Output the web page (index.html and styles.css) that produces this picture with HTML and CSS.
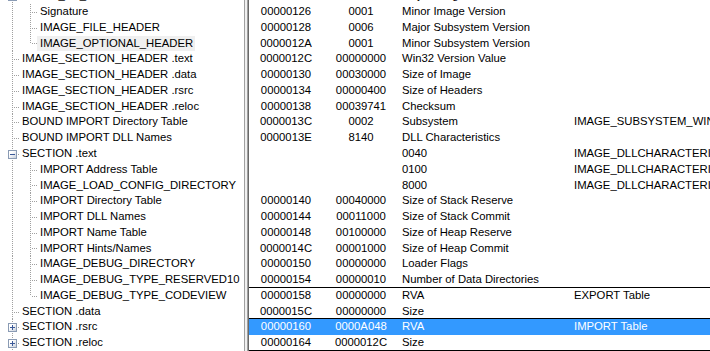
FILE: index.html
```html
<!DOCTYPE html>
<html lang="en">
<head>
  <meta charset="UTF-8" />
  <title>PE Headers</title>
  <link rel="stylesheet" href="styles.css">
</head>
<body>
  <div class="window">
    <div class="tree-pane">
      <div class="tree">
        <div class="node"><span class="g t"><span class="box minus"></span></span><span class="label">IMAGE_NT_HEADERS</span></div>
        <div class="node"><span class="g v"></span><span class="g t"></span><span class="label">Signature</span></div>
        <div class="node"><span class="g v"></span><span class="g t"></span><span class="label">IMAGE_FILE_HEADER</span></div>
        <div class="node"><span class="g v"></span><span class="g e"></span><span class="label selected">IMAGE_OPTIONAL_HEADER</span></div>
        <div class="node"><span class="g t"></span><span class="label">IMAGE_SECTION_HEADER .text</span></div>
        <div class="node"><span class="g t"></span><span class="label">IMAGE_SECTION_HEADER .data</span></div>
        <div class="node"><span class="g t"></span><span class="label">IMAGE_SECTION_HEADER .rsrc</span></div>
        <div class="node"><span class="g t"></span><span class="label">IMAGE_SECTION_HEADER .reloc</span></div>
        <div class="node"><span class="g t"></span><span class="label">BOUND IMPORT Directory Table</span></div>
        <div class="node"><span class="g t"></span><span class="label">BOUND IMPORT DLL Names</span></div>
        <div class="node"><span class="g t"><span class="box minus"></span></span><span class="label">SECTION .text</span></div>
        <div class="node"><span class="g v"></span><span class="g t"></span><span class="label">IMPORT Address Table</span></div>
        <div class="node"><span class="g v"></span><span class="g t"></span><span class="label">IMAGE_LOAD_CONFIG_DIRECTORY</span></div>
        <div class="node"><span class="g v"></span><span class="g t"></span><span class="label">IMPORT Directory Table</span></div>
        <div class="node"><span class="g v"></span><span class="g t"></span><span class="label">IMPORT DLL Names</span></div>
        <div class="node"><span class="g v"></span><span class="g t"></span><span class="label">IMPORT Name Table</span></div>
        <div class="node"><span class="g v"></span><span class="g t"></span><span class="label">IMPORT Hints/Names</span></div>
        <div class="node"><span class="g v"></span><span class="g t"></span><span class="label">IMAGE_DEBUG_DIRECTORY</span></div>
        <div class="node"><span class="g v"></span><span class="g t"></span><span class="label">IMAGE_DEBUG_TYPE_RESERVED10</span></div>
        <div class="node"><span class="g v"></span><span class="g e"></span><span class="label">IMAGE_DEBUG_TYPE_CODEVIEW</span></div>
        <div class="node"><span class="g t"></span><span class="label">SECTION .data</span></div>
        <div class="node"><span class="g t"><span class="box plus"></span></span><span class="label">SECTION .rsrc</span></div>
        <div class="node"><span class="g t"><span class="box plus"></span></span><span class="label">SECTION .reloc</span></div>
      </div>
    </div>
    <div class="splitter"></div>
    <div class="list-pane">
      <div class="list">
        <div class="row"><span class="c-off">00000124</span><span class="c-val">0000</span><span class="c-desc">Major Image Version</span></div>
        <div class="row"><span class="c-off">00000126</span><span class="c-val">0001</span><span class="c-desc">Minor Image Version</span></div>
        <div class="row"><span class="c-off">00000128</span><span class="c-val">0006</span><span class="c-desc">Major Subsystem Version</span></div>
        <div class="row"><span class="c-off">0000012A</span><span class="c-val">0001</span><span class="c-desc">Minor Subsystem Version</span></div>
        <div class="row"><span class="c-off">0000012C</span><span class="c-val">00000000</span><span class="c-desc">Win32 Version Value</span></div>
        <div class="row"><span class="c-off">00000130</span><span class="c-val">00030000</span><span class="c-desc">Size of Image</span></div>
        <div class="row"><span class="c-off">00000134</span><span class="c-val">00000400</span><span class="c-desc">Size of Headers</span></div>
        <div class="row"><span class="c-off">00000138</span><span class="c-val">00039741</span><span class="c-desc">Checksum</span></div>
        <div class="row"><span class="c-off">0000013C</span><span class="c-val">0002</span><span class="c-desc">Subsystem</span><span class="c-info">IMAGE_SUBSYSTEM_WINDOWS_GUI</span></div>
        <div class="row"><span class="c-off">0000013E</span><span class="c-val">8140</span><span class="c-desc">DLL Characteristics</span></div>
        <div class="row"><span class="c-off"></span><span class="c-val"></span><span class="c-desc">0040</span><span class="c-info">IMAGE_DLLCHARACTERISTICS_DYNAMIC_BASE</span></div>
        <div class="row"><span class="c-off"></span><span class="c-val"></span><span class="c-desc">0100</span><span class="c-info">IMAGE_DLLCHARACTERISTICS_NX_COMPAT</span></div>
        <div class="row"><span class="c-off"></span><span class="c-val"></span><span class="c-desc">8000</span><span class="c-info">IMAGE_DLLCHARACTERISTICS_TERMINAL_SERVER_AWARE</span></div>
        <div class="row"><span class="c-off">00000140</span><span class="c-val">00040000</span><span class="c-desc">Size of Stack Reserve</span></div>
        <div class="row"><span class="c-off">00000144</span><span class="c-val">00011000</span><span class="c-desc">Size of Stack Commit</span></div>
        <div class="row"><span class="c-off">00000148</span><span class="c-val">00100000</span><span class="c-desc">Size of Heap Reserve</span></div>
        <div class="row"><span class="c-off">0000014C</span><span class="c-val">00001000</span><span class="c-desc">Size of Heap Commit</span></div>
        <div class="row"><span class="c-off">00000150</span><span class="c-val">00000000</span><span class="c-desc">Loader Flags</span></div>
        <div class="row sep"><span class="c-off">00000154</span><span class="c-val">00000010</span><span class="c-desc">Number of Data Directories</span></div>
        <div class="row"><span class="c-off">00000158</span><span class="c-val">00000000</span><span class="c-desc">RVA</span><span class="c-info">EXPORT Table</span></div>
        <div class="row sep"><span class="c-off">0000015C</span><span class="c-val">00000000</span><span class="c-desc">Size</span></div>
        <div class="row selected"><span class="c-off">00000160</span><span class="c-val">0000A048</span><span class="c-desc">RVA</span><span class="c-info">IMPORT Table</span></div>
        <div class="row sep"><span class="c-off">00000164</span><span class="c-val">0000012C</span><span class="c-desc">Size</span></div>
      </div>
    </div>
  </div>
</body>
</html>
```

FILE: styles.css
```css
html, body {
  margin: 0;
  padding: 0;
  background-color: #fff;
  overflow: hidden;
}
body {
  font-family: "Liberation Sans", Arial, sans-serif;
  font-size: 11.3px;
  color: #000;
}
.window {
  display: flex;
  width: 710px;
  height: 351px;
}
.tree-pane {
  width: 244px;
  flex: none;
  border-right: 1px solid #a0a0a0;
  overflow: hidden;
  background-color: #fff;
}
.splitter {
  width: 2px;
  flex: none;
  background-color: #f0f0f0;
}
.list-pane {
  flex: 1;
  min-width: 0;
  border-left: 1px solid #a0a0a0;
  box-shadow: inset 1px 0 0 #696969;
  padding-left: 1px;
  overflow: hidden;
  background-color: #fff;
}
.tree, .list {
  margin-top: -11.7px;
}
.node, .row {
  display: flex;
  height: 15.78px;
  line-height: 15.78px;
  white-space: nowrap;
}
.node {
  padding-left: 3px;
}
.g {
  position: relative;
  width: 18px;
  flex: none;
}
.g.v::before, .g.t::before, .g.e::before {
  content: "";
  position: absolute;
  left: 9px;
  top: 0;
  bottom: 0;
  width: 1px;
  background: repeating-linear-gradient(to bottom, #a0a0a0 0 1px, transparent 1px 2px);
}
.g.e::before {
  bottom: 50%;
}
.g.t::after, .g.e::after {
  content: "";
  position: absolute;
  left: 10px;
  right: 1px;
  top: 50%;
  height: 1px;
  background: repeating-linear-gradient(to right, transparent 0 1px, #a0a0a0 1px 2px);
}
.box {
  position: absolute;
  z-index: 1;
  left: 5px;
  top: calc(50% - 4px);
  width: 7px;
  height: 7px;
  border: 1px solid #8a9bb4;
  background: linear-gradient(to bottom right, #fff 30%, #c8d0dc);
}
.box::before, .box.plus::after {
  content: "";
  position: absolute;
  background-color: #3b5998;
}
.box::before {
  left: 1px;
  top: 3px;
  width: 5px;
  height: 1px;
}
.box.plus::after {
  left: 3px;
  top: 1px;
  width: 1px;
  height: 5px;
}
.label {
  padding: 0 2px 0 1px;
}
.label.selected {
  background-color: #f0f0f0;
  margin-left: -2px;
  padding-left: 3px;
}
.c-off, .c-val {
  flex: none;
  text-align: center;
}
.c-off {
  width: 74px;
}
.c-val {
  width: 76px;
}
.c-desc {
  flex: none;
  width: 169px;
  padding-left: 3px;
}
.c-info {
  padding-left: 3px;
}
.row.sep {
  box-shadow: inset 0 -1px 0 #000;
}
.row.selected {
  background-color: #3399ff;
  color: #fff;
}
```
